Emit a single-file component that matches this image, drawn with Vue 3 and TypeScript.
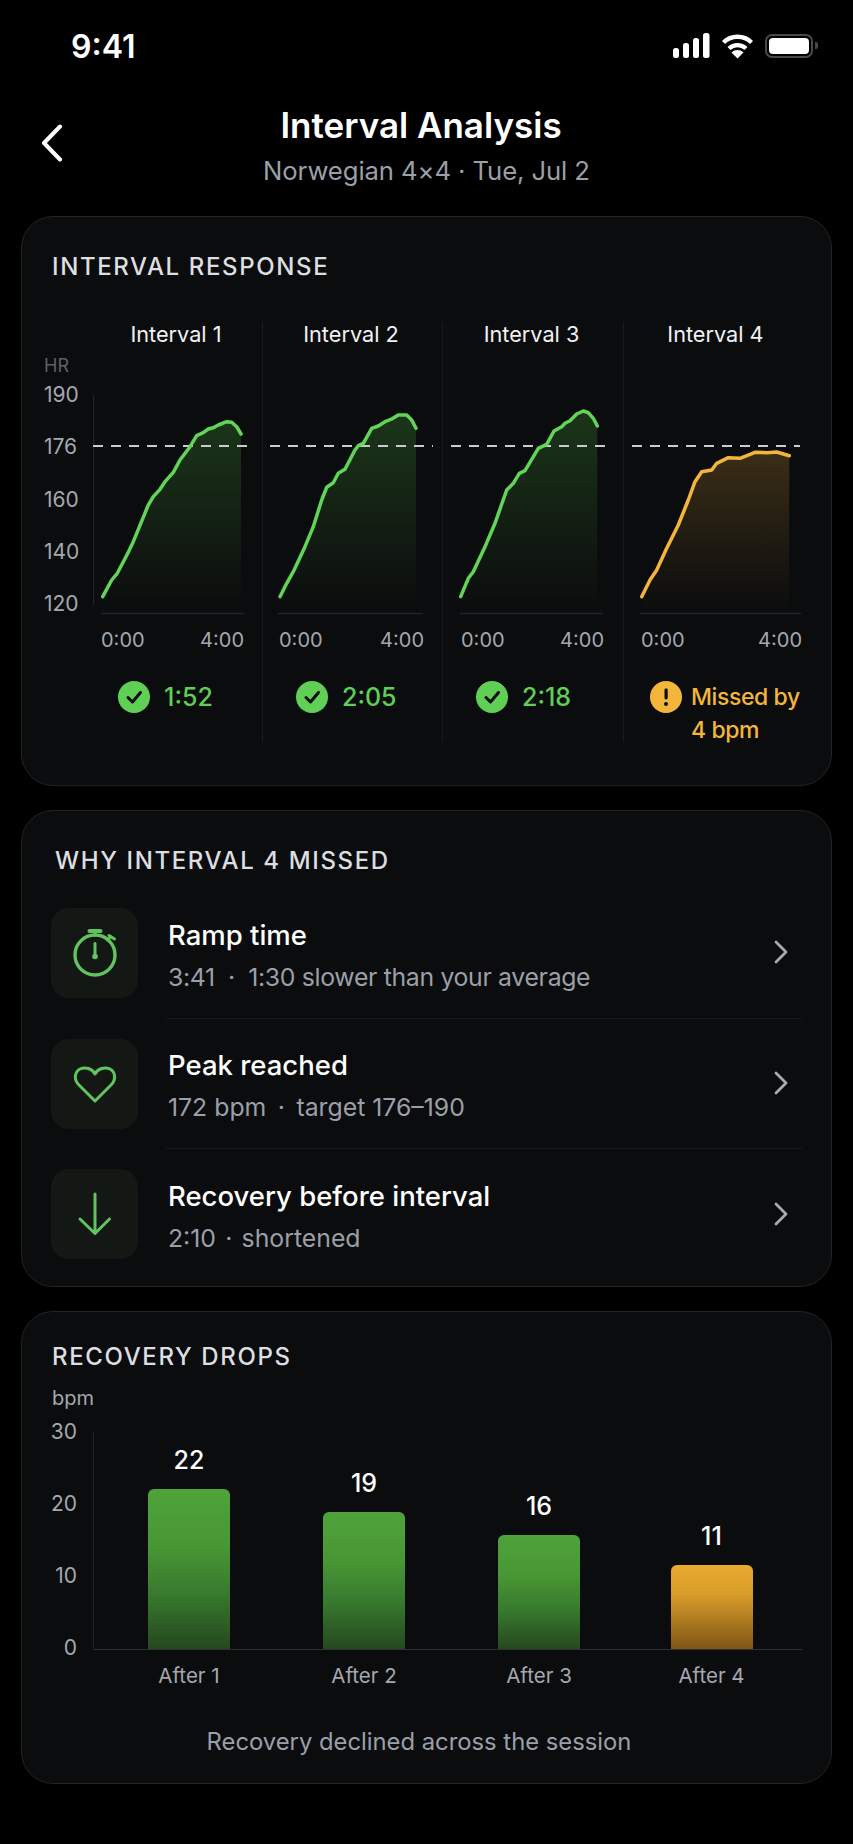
<script setup lang="ts">
type Pt = [number, number]

interface Interval {
  id: string
  title: string
  x0: number
  width: number
  dash: [number, number]
  base: [number, number]
  endX: number
  resultX: number
  points: Pt[]
  result: string
  missed?: boolean
}

interface Reason {
  title: string
  detail: string
  icon: 'timer' | 'heart' | 'down'
}

interface Drop {
  label: string
  value: number
  height: number
  missed?: boolean
}

// chart coordinates are page x / page y, the viewBox shifts them into each column
const intervals: Interval[] = [
  {
    id: 'a', title: 'Interval 1', x0: 93, width: 169, dash: [93, 253], base: [101, 244], endX: 241, resultX: 25, result: '1:52',
    points: [[102.7, 596.7], [111.7, 580], [117.3, 573.3], [128.3, 552.3], [133.3, 541.7], [148.3, 505], [153.3, 496.7], [160, 489.3], [165, 481.7], [173.3, 472.3], [180, 460], [190, 446.7], [196.7, 435.7], [203.3, 432.7], [208.3, 429], [213.3, 427.7], [218.3, 425], [226.7, 421.7], [231.7, 422.3], [236.7, 426.7], [241, 434]]
  },
  {
    id: 'b', title: 'Interval 2', x0: 262, width: 180, dash: [270, 433], base: [278, 423], endX: 416, resultX: 33, result: '2:05',
    points: [[280, 596.7], [286.7, 583.3], [293.3, 571.7], [305, 546.7], [313.3, 526.7], [321.7, 500], [326.7, 487.3], [333.3, 482.7], [338.3, 473.3], [345, 469.3], [355, 450], [358.3, 445.7], [363.3, 443.3], [371.7, 428.3], [378.3, 426], [385, 421.7], [391.7, 419], [398.3, 415], [406.7, 415], [411.7, 420], [416, 428.3]]
  },
  {
    id: 'c', title: 'Interval 3', x0: 442, width: 181, dash: [451, 613], base: [460, 603], endX: 597, resultX: 33, result: '2:18',
    points: [[460.7, 596.7], [468.3, 578.3], [473.3, 571.7], [485, 546.7], [495, 523.3], [506.7, 490], [513.3, 483.3], [519.3, 473.3], [525, 470.7], [538.3, 448.3], [546.7, 444.3], [554, 431], [561.7, 426.7], [565, 423.3], [570, 420.7], [576.7, 414], [583.3, 411], [588.3, 412.7], [593.3, 418.3], [597.3, 426]]
  },
  {
    id: 'd', title: 'Interval 4', x0: 623, width: 187, dash: [632, 800], base: [640, 801], endX: 789, resultX: 26, result: 'Missed by\n4 bpm', missed: true,
    points: [[641.7, 596.7], [650, 580], [656.7, 570], [666.7, 548.3], [678.3, 525], [688.3, 500], [695, 481.7], [701.7, 471.7], [711.7, 470], [716.7, 463.3], [728.3, 457.7], [740, 458.3], [755, 452.3], [766.7, 452.7], [776.7, 452], [789.3, 455.7]]
  }
]

const hrTicks = [190, 176, 160, 140, 120]

const reasons: Reason[] = [
  { title: 'Ramp time', detail: '3:41  ·  1:30 slower than your average', icon: 'timer' },
  { title: 'Peak reached', detail: '172 bpm \u2009·\u2009 target 176–190', icon: 'heart' },
  { title: 'Recovery before interval', detail: '2:10 \u200A·\u200A shortened', icon: 'down' }
]

const drops: Drop[] = [
  { label: 'After 1', value: 22, height: 160 },
  { label: 'After 2', value: 19, height: 137 },
  { label: 'After 3', value: 16, height: 114 },
  { label: 'After 4', value: 11, height: 84, missed: true }
]

const bpmTicks = [30, 20, 10, 0]

function linePath(points: Pt[]): string {
  return points.map((p, i) => `${i === 0 ? 'M' : 'L'}${p[0]} ${p[1]}`).join(' ')
}

function areaPath(item: Interval): string {
  const first = item.points[0]
  return `${linePath(item.points)} L${item.endX} 611 L${first[0]} 611 Z`
}
</script>

<template>
  <div class="screen">
    <div class="status-bar">
      <span class="clock">9:41</span>
      <div class="status-icons">
        <svg width="38" height="26" viewBox="0 0 38 26" fill="#fff">
          <rect x="1" y="15" width="6" height="10" rx="2.5" />
          <rect x="11" y="10" width="6" height="15" rx="2.5" />
          <rect x="21" y="5" width="6" height="20" rx="2.5" />
          <rect x="31" y="0" width="6.5" height="25" rx="2.5" />
        </svg>
        <svg width="33" height="26" viewBox="0 0 33 26" fill="none" stroke="#fff" stroke-width="4.4">
          <path d="M2.5 9.5 A20 20 0 0 1 30.5 9.5" />
          <path d="M8 15.5 A12.5 12.5 0 0 1 25 15.5" />
          <path d="M16.5 25.5 L10.5 19.5 A8.5 8.5 0 0 1 22.5 19.5 Z" fill="#fff" stroke="none" />
        </svg>
        <div class="battery"><div class="battery-fill"></div></div>
      </div>
    </div>

    <header class="nav">
      <svg class="back" width="24" height="38" viewBox="0 0 24 38" fill="none" stroke="#fff" stroke-width="4" stroke-linecap="round" stroke-linejoin="round">
        <path d="M20 2.5 L4 19 L20 35.5" />
      </svg>
      <h1>Interval Analysis</h1>
      <p>Norwegian 4×4 · Tue, Jul 2</p>
    </header>

    <section class="card response-card">
      <h2>INTERVAL RESPONSE</h2>
      <div class="response">
        <div class="hr-axis">
          <span class="hr-label">HR</span>
          <div class="hr-ticks">
            <span v-for="t in hrTicks" :key="t">{{ t }}</span>
          </div>
        </div>
        <div
          v-for="item in intervals"
          :key="item.id"
          class="interval"
          :class="{ missed: item.missed }"
          :style="{ width: `${item.width}px` }"
        >
          <div class="interval-title">{{ item.title }}</div>
          <svg class="hr-chart" :width="item.width" height="274" :viewBox="`${item.x0} 346 ${item.width} 274`">
            <defs>
              <linearGradient :id="`fill-${item.id}`" x1="0" y1="0" x2="0" y2="1">
                <stop offset="0" :stop-color="item.missed ? '#f5b53a' : '#4fb840'" :stop-opacity="item.missed ? 0.2 : 0.24" />
                <stop offset="1" :stop-color="item.missed ? '#f5b53a' : '#4fb840'" stop-opacity="0" />
              </linearGradient>
            </defs>
            <line v-if="item.id === 'a'" x1="93.5" y1="395" x2="93.5" y2="605" stroke="#202225" stroke-width="1.5" />
            <line :x1="item.base[0]" y1="613.5" :x2="item.base[1]" y2="613.5" stroke="#222426" stroke-width="1.5" />
            <path :d="areaPath(item)" :fill="`url(#fill-${item.id})`" />
            <line :x1="item.dash[0]" y1="446" :x2="item.dash[1]" y2="446" stroke="#c9cbce" stroke-width="1.8" stroke-dasharray="10 8" />
            <path :d="linePath(item.points)" fill="none" :stroke="item.missed ? '#f4b63a' : '#62d457'" stroke-width="3.5" stroke-linecap="round" stroke-linejoin="round" />
          </svg>
          <div class="times" :style="{ marginLeft: `${item.base[0] - item.x0}px`, width: `${item.base[1] - item.base[0]}px` }">
            <span>0:00</span>
            <span>4:00</span>
          </div>
          <div class="result" :style="{ paddingLeft: `${item.resultX}px` }">
            <svg width="32" height="32" viewBox="0 0 32 32">
              <circle cx="16" cy="16" r="16" :fill="item.missed ? '#f4b63a' : '#5fcf55'" />
              <path v-if="!item.missed" d="M10 16.5 L14.5 21 L22.5 11.5" fill="none" stroke="#0b0c0d" stroke-width="3" stroke-linecap="round" stroke-linejoin="round" />
              <template v-else>
                <rect x="14.5" y="7.5" width="3.2" height="11" rx="1.4" fill="#0b0c0d" />
                <circle cx="16" cy="23" r="2" fill="#0b0c0d" />
              </template>
            </svg>
            <span class="result-text">{{ item.result }}</span>
          </div>
        </div>
      </div>
    </section>

    <section class="card why-card">
      <h2>WHY INTERVAL 4 MISSED</h2>
      <div v-for="r in reasons" :key="r.title" class="reason">
        <div class="reason-icon">
          <svg width="87" height="90" viewBox="0 0 87 90" fill="none" stroke="#62c45c" stroke-width="3" stroke-linecap="round" stroke-linejoin="round">
            <template v-if="r.icon === 'timer'">
              <circle cx="44" cy="47" r="20" stroke-width="3.4" />
              <path d="M38.5 23 H49.5" stroke-width="4" />
              <path d="M44 23 V27 M56.5 32 L60 28.5 M58 27.5 L63.5 31" />
              <path d="M44 35.5 V48" />
              <circle cx="44" cy="48.5" r="2.8" fill="#62c45c" stroke="none" />
            </template>
            <path
              v-else-if="r.icon === 'heart'"
              d="M44 62 L28 46 C22.5 40.5 23.5 33 29 30 C34.5 27.5 41 29.5 44 35 C47 29.5 53.5 27.5 59 30 C64.5 33 65.5 40.5 60 46 Z"
            />
            <path v-else d="M44 25 V64 M29 50 L44 64.5 L58.5 50" />
          </svg>
        </div>
        <div class="reason-body">
          <div class="reason-text">
            <div class="reason-title">{{ r.title }}</div>
            <div class="reason-detail" :class="{ tight: r.icon === 'timer' }">{{ r.detail }}</div>
          </div>
          <svg class="chevron" width="14" height="24" viewBox="0 0 14 24" fill="none" stroke="#a9abb0" stroke-width="2.8" stroke-linecap="round" stroke-linejoin="round">
            <path d="M2 2 L12 12 L2 22" />
          </svg>
        </div>
      </div>
    </section>

    <section class="card drops-card">
      <h2>RECOVERY DROPS</h2>
      <div class="unit">bpm</div>
      <div class="bar-chart">
        <div class="bar-axis">
          <span v-for="t in bpmTicks" :key="t">{{ t }}</span>
        </div>
        <div class="bar-main">
          <div class="bar-plot">
            <div v-for="d in drops" :key="d.label" class="bar-col">
              <span class="bar-value">{{ d.value }}</span>
              <div class="bar" :class="{ missed: d.missed }" :style="{ height: `${d.height}px` }"></div>
            </div>
          </div>
          <div class="bar-labels">
            <span v-for="d in drops" :key="d.label">{{ d.label }}</span>
          </div>
        </div>
      </div>
      <p class="summary">Recovery declined across the session</p>
    </section>
  </div>
</template>

<style>
html,
body {
  background: #000;
}
</style>

<style scoped>
.screen {
  width: 853px;
  height: 1844px;
  box-sizing: border-box;
  padding: 0 21px;
  background: #000;
  font-family: Inter, "Liberation Sans", sans-serif;
  color: #fff;
  overflow: hidden;
}

.status-bar {
  height: 92px;
  display: flex;
  align-items: center;
  justify-content: space-between;
  padding: 0 19px 0 50px;
}

.clock {
  font-size: 32px;
  font-weight: 600;
}

.status-icons {
  display: flex;
  align-items: center;
  gap: 11px;
}

.battery {
  position: relative;
  width: 48px;
  height: 24px;
  box-sizing: border-box;
  border: 2.5px solid #46484b;
  border-radius: 7px;
  padding: 2px;
}

.battery::after {
  content: "";
  position: absolute;
  right: -7px;
  top: 6px;
  width: 3px;
  height: 7px;
  border-radius: 0 2px 2px 0;
  background: #46484b;
}

.battery-fill {
  height: 100%;
  border-radius: 4px;
  background: #fff;
}

.nav {
  position: relative;
  height: 124px;
  box-sizing: border-box;
  padding-top: 13px;
  text-align: center;
}

.back {
  position: absolute;
  left: 19px;
  top: 32px;
}

.nav h1 {
  margin: 0 11px 10px 0;
  font-size: 35px;
  line-height: 40px;
  font-weight: 600;
}

.nav p {
  margin: 0;
  font-size: 25.7px;
  line-height: 32px;
  letter-spacing: -0.1px;
  color: #9b9fa8;
}

.card {
  box-sizing: border-box;
  margin-bottom: 24px;
  border: 1.5px solid #212325;
  border-radius: 32px;
  background: #0b0c0d;
}

.card h2 {
  margin: 0;
  font-size: 24px;
  line-height: 30px;
  font-weight: 500;
  letter-spacing: 1.62px;
  color: #dcdee1;
}

.response-card {
  height: 570px;
  padding: 35px 0 0 22px;
}

.response-card h2 {
  margin-left: 8px;
}

.response {
  display: flex;
  margin-top: 40px;
}

.hr-axis {
  width: 49px;
  flex: none;
  box-sizing: border-box;
  font-size: 21px;
  line-height: 24px;
  color: #a5a8ae;
}

.hr-label {
  display: block;
  margin-top: 32px;
  font-size: 18px;
  color: #5f6165;
}

.hr-ticks {
  display: flex;
  flex-direction: column;
  justify-content: space-between;
  height: 233px;
  margin-top: 5px;
}

.interval {
  position: relative;
  flex: none;
  height: 420px;
  border-left: 1px solid #17191b;
  box-sizing: border-box;
}

.interval:nth-child(2) {
  border-left: none;
}

.interval-title {
  height: 24px;
  padding-right: 3px;
  line-height: 24px;
  font-size: 21.7px;
  text-align: center;
  color: #f0f1f2;
}

.hr-chart {
  display: block;
  margin-left: -1px;
}

.interval:nth-child(2) .hr-chart {
  margin-left: 0;
}

.times {
  display: flex;
  justify-content: space-between;
  margin-top: 8px;
  font-size: 20px;
  line-height: 24px;
  color: #a5a8ae;
}

.result {
  display: flex;
  align-items: flex-start;
  gap: 14px;
  margin-top: 29px;
  font-size: 25px;
  line-height: 33px;
  font-weight: 500;
  color: #5fcf55;
}

.interval.missed .result {
  gap: 9px;
  font-size: 23px;
  letter-spacing: -0.4px;
  color: #f4b63a;
}

.result-text {
  white-space: pre-line;
}

.why-card {
  height: 477px;
  padding: 35px 0 0 29px;
}

.why-card h2 {
  margin-left: 4px;
  margin-bottom: 12px;
}

.reason {
  display: flex;
  height: 130.5px;
}

.reason-icon {
  flex: none;
  width: 87px;
  height: 90px;
  margin-top: 20px;
  margin-right: 28px;
  border-radius: 18px;
  background: #131814;
}

.reason-icon svg {
  display: block;
}

.reason-body {
  flex: none;
  width: 636px;
  display: flex;
  align-items: center;
  justify-content: space-between;
  box-sizing: border-box;
  padding: 4px 14px 0 2px;
  border-bottom: 1.5px solid #17191b;
}

.reason:last-child .reason-body {
  border-bottom: none;
}

.chevron {
  margin-bottom: 5px;
}

.reason-title {
  font-size: 27.5px;
  line-height: 36px;
  font-weight: 500;
  color: #fff;
}

.reason-detail {
  margin-top: 8px;
  font-size: 24.8px;
  line-height: 32px;
  color: #9b9fa8;
  white-space: pre;
}

.reason-detail.tight {
  letter-spacing: -0.32px;
}

.drops-card {
  height: 473px;
  margin-bottom: 0;
  padding: 30px 0 0 30px;
}

.unit {
  margin-top: 14px;
  font-size: 20px;
  line-height: 24px;
  color: #a5a8ae;
}

.bar-chart {
  display: flex;
  align-items: flex-start;
  margin-top: 10px;
}

.bar-axis {
  width: 25px;
  height: 240px;
  margin-right: 16px;
  display: flex;
  flex-direction: column;
  justify-content: space-between;
  align-items: flex-end;
  font-size: 21px;
  line-height: 24px;
  color: #a5a8ae;
}

.bar-main {
  margin-top: 12px;
  width: 709px;
}

.bar-plot {
  display: grid;
  grid-template-columns: 175px 175px 175px 170px;
  height: 217px;
  padding-left: 7.5px;
  border-left: 1.5px solid #202225;
  border-bottom: 1.5px solid #2d2f32;
}

.bar-col {
  display: flex;
  flex-direction: column;
  align-items: center;
  justify-content: flex-end;
}

.bar-value {
  margin-bottom: 14px;
  font-size: 25px;
  line-height: 30px;
  font-weight: 500;
}

.bar {
  width: 82px;
  border-radius: 6px 6px 0 0;
  background: linear-gradient(180deg, #4fa33a 0%, #489735 35%, #387a2e 65%, #25481f 100%);
}

.bar.missed {
  background: linear-gradient(180deg, #e8aa2f 0%, #d89c2a 35%, #b07c20 65%, #7d5413 100%);
}

.bar-labels {
  display: grid;
  grid-template-columns: 175px 175px 175px 170px;
  margin-top: 14px;
  padding-left: 8.5px;
  font-size: 20.5px;
  line-height: 24px;
  color: #a5a8ae;
  text-align: center;
}

.summary {
  margin: 38px 45px 0 0;
  font-size: 23.8px;
  line-height: 32px;
  text-align: center;
  color: #9b9fa8;
}
</style>
